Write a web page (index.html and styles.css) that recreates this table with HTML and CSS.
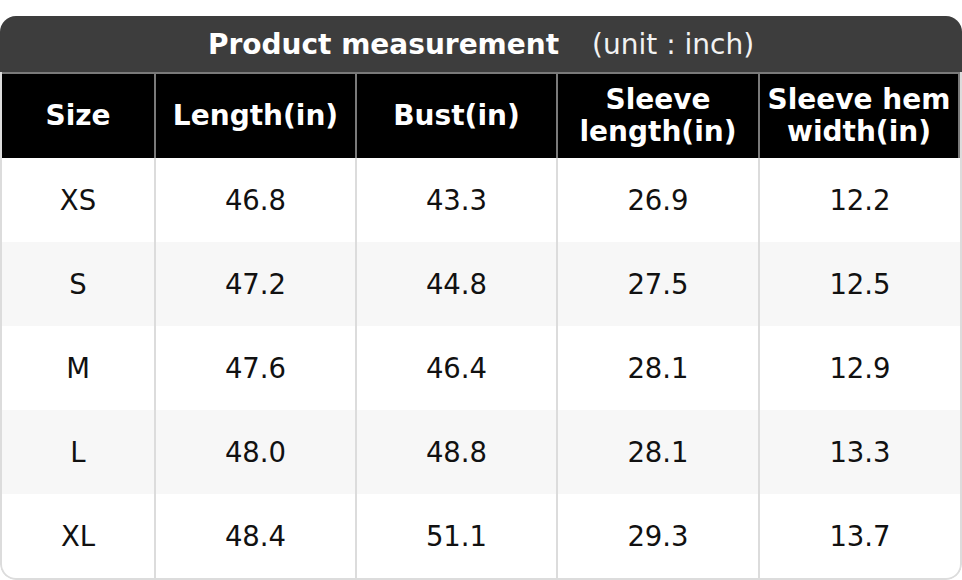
FILE: index.html
```html
<!DOCTYPE html>
<html lang="en">
<head>
<meta charset="utf-8">
<title>Product measurement</title>
<link rel="stylesheet" href="styles.css">
</head>
<body>
<div class="card">
  <div class="title"><span class="title-main">Product measurement</span><span class="title-unit">(unit : inch)</span></div>
  <div class="table-wrap">
    <table class="sizes">
      <colgroup>
        <col class="c1"><col class="c2"><col class="c3"><col class="c4"><col class="c5">
      </colgroup>
      <thead>
        <tr><th>Size</th><th>Length(in)</th><th>Bust(in)</th><th>Sleeve length(in)</th><th>Sleeve hem width(in)</th></tr>
      </thead>
      <tbody>
        <tr><td>XS</td><td>46.8</td><td>43.3</td><td>26.9</td><td>12.2</td></tr>
        <tr><td>S</td><td>47.2</td><td>44.8</td><td>27.5</td><td>12.5</td></tr>
        <tr><td>M</td><td>47.6</td><td>46.4</td><td>28.1</td><td>12.9</td></tr>
        <tr><td>L</td><td>48.0</td><td>48.8</td><td>28.1</td><td>13.3</td></tr>
        <tr><td>XL</td><td>48.4</td><td>51.1</td><td>29.3</td><td>13.7</td></tr>
      </tbody>
    </table>
  </div>
</div>
</body>
</html>
```
FILE: styles.css
```css
html, body {
  margin: 0;
  padding: 0;
  background: #fff;
}
body {
  padding-top: 16px;
  font-family: "DejaVu Sans", "Liberation Sans", sans-serif;
}
.card {
  width: 962px;
  border-radius: 16px;
  overflow: hidden;
}
.title {
  height: 56px;
  background: #3d3d3d;
  color: #fff;
  display: flex;
  align-items: center;
  justify-content: center;
  font-size: 28px;
}
.title-main {
  font-weight: bold;
}
.title-unit {
  margin-left: 33px;
  color: #f2f2f2;
}
.table-wrap {
  border: 2px solid #dcdcdc;
  border-top: none;
  border-radius: 0 0 16px 16px;
  overflow: hidden;
}
.sizes {
  width: 958px;
  table-layout: fixed;
  border-collapse: separate;
  border-spacing: 0;
}
.c1 { width: 152px; }
.c2 { width: 201px; }
.c3 { width: 201px; }
.c4 { width: 202px; }
.c5 { width: 202px; }
.sizes th {
  background: #000;
  color: #fff;
  font-weight: bold;
  font-size: 28px;
  line-height: 32px;
  height: 86px;
  padding: 0 4px;
  box-sizing: border-box;
  border-top: 2px solid #7a7a7a;
  text-align: center;
  vertical-align: middle;
}
.sizes th + th {
  border-left: 2px solid #7a7a7a;
}
.sizes th:last-child {
  border-right: 2px solid #7a7a7a;
}
.sizes td {
  height: 84px;
  padding: 0;
  box-sizing: border-box;
  font-size: 27.5px;
  color: #111;
  text-align: center;
  vertical-align: middle;
}
.sizes td + td {
  border-left: 2px solid #dcdcdc;
}
.sizes tbody tr:nth-child(even) td {
  background: #f7f7f7;
}
```
